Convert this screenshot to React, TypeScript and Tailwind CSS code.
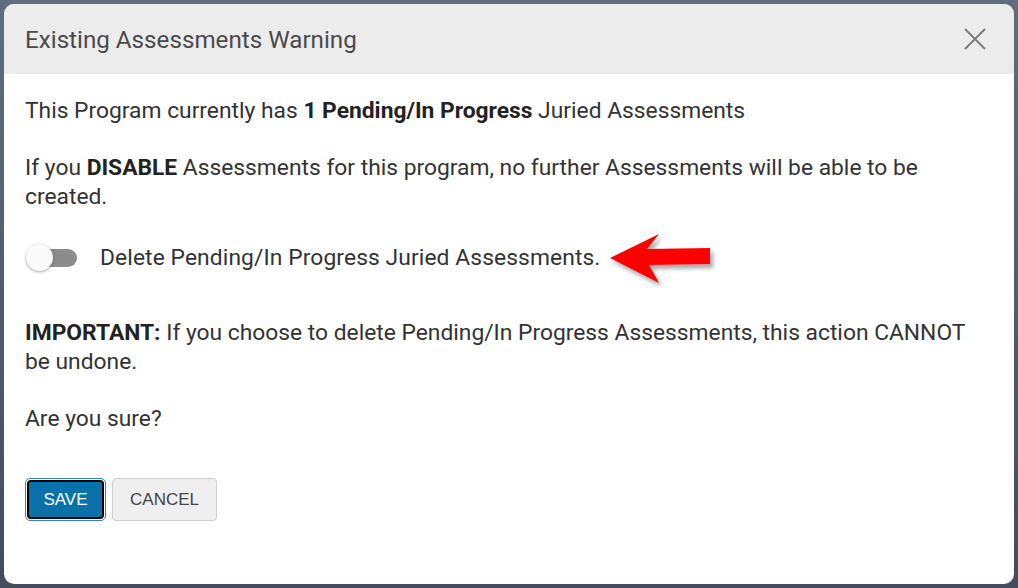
export default function App() {
  return (
    <div
      className="w-[1018px] h-[588px] p-[4px] bg-gradient-to-b from-[#5e6e7d] to-[#444c5c]"
      style={{ fontFamily: 'Roboto, "Liberation Sans", sans-serif' }}
    >
      <div className="h-[580px] w-[1010px] rounded-[10px] bg-white overflow-hidden flex flex-col">
        {/* Header */}
        <div className="h-[70px] bg-[#ececec] flex items-center justify-between pl-[21px] pr-[28px]">
          <h2 className="text-[24.2px] text-[#4a4a4a] pt-[2px]">Existing Assessments Warning</h2>
          <svg width="22" height="22" viewBox="0 0 22 22" className="text-[#7a7a7a]">
            <path d="M1 1L21 21M21 1L1 21" stroke="currentColor" strokeWidth="1.8" />
          </svg>
        </div>

        {/* Body */}
        <div className="pt-[22px] px-[21px] text-[22.8px] leading-[29px] text-[#333]">
          <p>
            This Program currently has <b className="text-[#222]">1 Pending/In Progress</b> Juried Assessments
          </p>
          <p className="mt-[28px]">
            If you <b className="text-[#222]">DISABLE</b> Assessments for this program, no further Assessments will be able to be
            created.
          </p>

          <div className="mt-[32px] flex items-center h-[29px]">
            <div className="relative w-[52px] h-[29px] flex items-center">
              <div className="ml-[8px] w-[45px] h-[18px] rounded-full bg-[#8c8c8c]" />
              <div className="absolute left-[1px] top-[1px] w-[27px] h-[27px] rounded-full bg-[#fafafa] shadow-[0_1px_3px_rgba(0,0,0,0.35)]" />
            </div>
            <span className="ml-[23px] tracking-[0.1px]">Delete Pending/In Progress Juried Assessments.</span>
            <svg width="110" height="56" viewBox="0 0 110 56" className="ml-[6px] -my-[14px] shrink-0">
              <defs>
                <filter id="sh" x="-20%" y="-20%" width="150%" height="160%">
                  <feDropShadow dx="3" dy="4" stdDeviation="2" floodColor="#000" floodOpacity="0.35" />
                </filter>
              </defs>
              <path
                d="M4 28 L53 4 L41 19 L104 18 L104 34 L43 35 L53 53 Z"
                fill="#ff0000"
                filter="url(#sh)"
              />
            </svg>
          </div>

          <p className="mt-[46px]">
            <b className="text-[#222]">IMPORTANT:</b> If you choose to delete Pending/In Progress Assessments, this action CANNOT
            be undone.
          </p>
          <p className="mt-[28px]">Are you sure?</p>

          <div
            className="mt-[45px] flex gap-[6px] text-[17px]"
            style={{ fontFamily: '"Liberation Sans", Arial, sans-serif' }}
          >
            <button className="w-[81px] h-[43px] rounded-[5px] border border-[#2f86b8] p-[1px]">
              <span className="flex h-full w-full items-center justify-center rounded-[4px] border-2 border-black bg-[#0a72a8] text-white">
                SAVE
              </span>
            </button>
            <button className="w-[105px] h-[43px] rounded-[4px] border border-[#cfcfcf] bg-[#efefef] text-[#444]">
              CANCEL
            </button>
          </div>
        </div>
      </div>
    </div>
  );
}
